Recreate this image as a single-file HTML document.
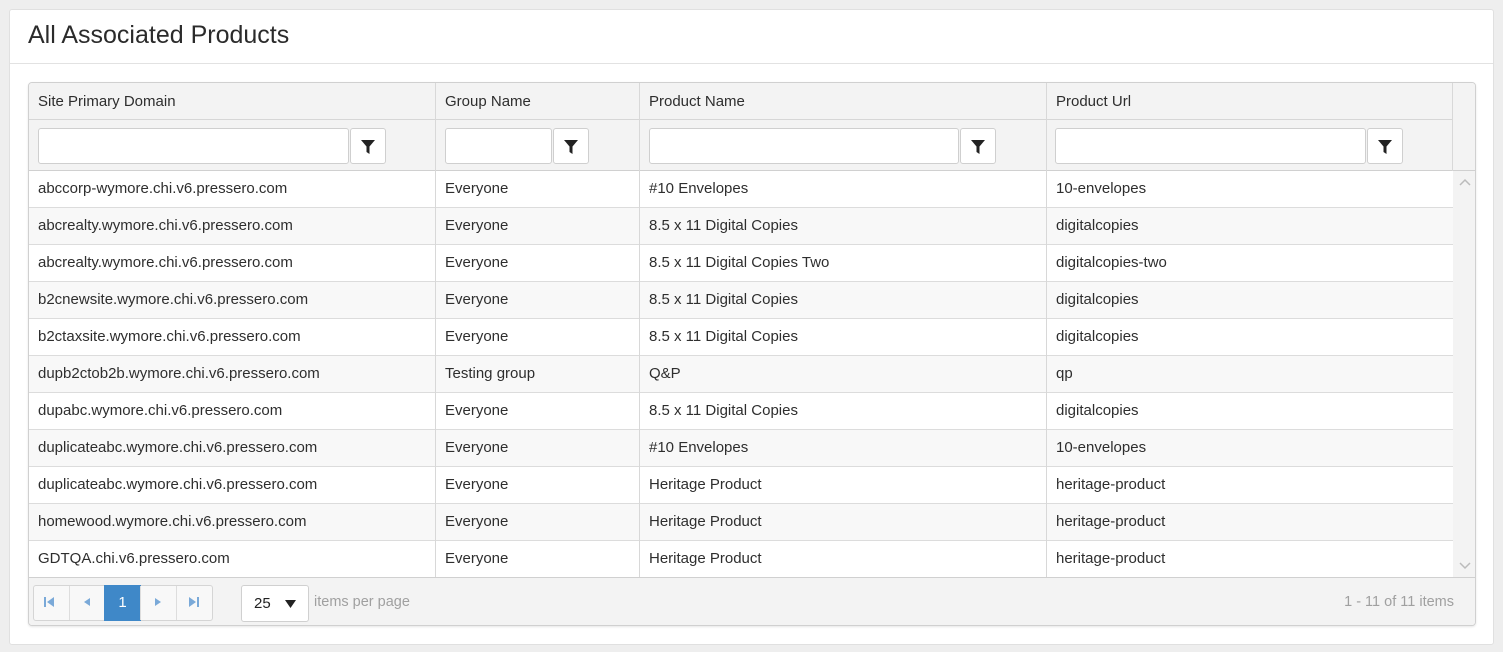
<!DOCTYPE html>
<html><head><style>
*{box-sizing:border-box;margin:0;padding:0}
body{width:1503px;height:652px;background:#eeeeee;font-family:"Liberation Sans",Arial,sans-serif;position:relative;overflow:hidden;color:#333}
.card{position:absolute;left:9px;top:9px;width:1485px;height:636px;background:#fff;border:1px solid #e0e0e0;border-radius:3px}
.title{position:absolute;left:18px;top:11px;font-size:25px;color:#2b2b2b}
.hr{position:absolute;left:0;right:0;top:53px;border-top:1px solid #e2e2e2}
.grid{position:absolute;left:28px;top:82px;width:1448px;height:544px;border:1px solid #d0d0d0;border-radius:4px;overflow:hidden;background:#fff;box-shadow:0 1px 2px rgba(0,0,0,.1)}
.a{position:absolute}
.hd{background:#f3f3f3}
.cell{position:absolute;font-size:15px;line-height:36px;padding-left:9px;white-space:nowrap;color:#2e2e2e}
.inp{position:absolute;height:36px;top:45px;background:#fff;border:1px solid #cfcfcf;border-radius:3px}
.btn{position:absolute;width:36px;height:36px;top:45px;background:#fff;border:1px solid #cfcfcf;border-radius:3px}
.btn svg{position:absolute;left:10px;top:11px}
.vl{position:absolute;width:1px;background:#d8d8d8}
.row{position:absolute;left:0;width:1424px;height:37px;border-bottom:1px solid #dcdcdc}
.pg{position:absolute;top:502px;height:36px;border:1px solid #d5d5d5;background:#f8f8f8}
</style></head><body>
<div class="card"><div class="title">All Associated Products</div><div class="hr"></div></div>
<div class="grid">
 <div class="a hd" style="left:0;top:0;width:1448px;height:88px;border-bottom:1px solid #d0d0d0"></div>
 <div class="a" style="left:0;top:36px;width:1424px;border-top:1px solid #d6d6d6"></div>
 <div class="vl" style="left:1423px;top:0;height:88px"></div>
 <div class="cell" style="left:0;top:1px">Site Primary Domain</div>
 <div class="cell" style="left:407px;top:1px">Group Name</div>
 <div class="cell" style="left:611px;top:1px">Product Name</div>
 <div class="cell" style="left:1018px;top:1px">Product Url</div>
 <div class="inp" style="left:9px;width:311px"></div><div class="btn" style="left:321px"><svg width="14" height="14" viewBox="0 0 14 14"><path d="M0 0H14L8.5 6.5V14L5.5 12V6.5Z" fill="#222"/></svg></div>
 <div class="inp" style="left:416px;width:107px"></div><div class="btn" style="left:524px"><svg width="14" height="14" viewBox="0 0 14 14"><path d="M0 0H14L8.5 6.5V14L5.5 12V6.5Z" fill="#222"/></svg></div>
 <div class="inp" style="left:620px;width:310px"></div><div class="btn" style="left:931px"><svg width="14" height="14" viewBox="0 0 14 14"><path d="M0 0H14L8.5 6.5V14L5.5 12V6.5Z" fill="#222"/></svg></div>
 <div class="inp" style="left:1026px;width:311px"></div><div class="btn" style="left:1338px"><svg width="14" height="14" viewBox="0 0 14 14"><path d="M0 0H14L8.5 6.5V14L5.5 12V6.5Z" fill="#222"/></svg></div>
 <div class="a" style="left:1424px;top:88px;width:24px;height:406px;background:#f3f3f3"></div>
 <svg class="a" style="left:1430px;top:95px" width="12" height="8"><path d="M1 7L6 2L11 7" stroke="#bbb" stroke-width="1.5" fill="none"/></svg>
 <svg class="a" style="left:1430px;top:479px" width="12" height="8"><path d="M1 1L6 6L11 1" stroke="#bbb" stroke-width="1.5" fill="none"/></svg>
 <div id="rows"></div>
 <div class="a" style="left:0;top:494px;width:1448px;height:50px;background:#f3f3f3;border-top:1px solid #d0d0d0"></div>
 <div class="pg" style="left:4px;width:180px;border-radius:3px;background:#f8f8f8"></div>
 <div class="a" style="left:75px;top:502px;width:37px;height:36px;background:#3f88c8;color:#fff;font-size:15px;line-height:36px;text-align:center">1</div>
 <div class="a" style="left:40px;top:503px;height:34px;border-left:1px solid #ddd"></div>
 <div class="a" style="left:111px;top:503px;height:34px;border-left:1px solid #ddd"></div>
 <div class="a" style="left:147px;top:503px;height:34px;border-left:1px solid #ddd"></div>
 <svg class="a" style="left:15px;top:514px" width="10" height="10"><rect x="0" y="0" width="2" height="10" fill="#7aa9d8"/><path d="M10 0V10L3 5Z" fill="#7aa9d8"/></svg>
 <svg class="a" style="left:53px;top:514px" width="10" height="10"><path d="M8 1V9L2 5Z" fill="#7aa9d8"/></svg>
 <svg class="a" style="left:124px;top:514px" width="10" height="10"><path d="M2 1V9L8 5Z" fill="#7aa9d8"/></svg>
 <svg class="a" style="left:160px;top:514px" width="10" height="10"><path d="M0 0V10L7 5Z" fill="#7aa9d8"/><rect x="8" y="0" width="2" height="10" fill="#7aa9d8"/></svg>
 <div class="a" style="left:212px;top:502px;width:68px;height:37px;background:#fff;border:1px solid #d0d0d0;border-radius:3px;font-size:15px;line-height:35px;padding-left:12px;color:#222">25<svg style="position:absolute;left:43px;top:14px" width="11" height="8"><path d="M0 0H11L5.5 8Z" fill="#222"/></svg></div>
 <div class="a" style="left:285px;top:511px;font-size:14.5px;color:#a0a0a0">items per page</div>
 <div class="a" style="right:21px;top:511px;font-size:14.5px;color:#a0a0a0">1 - 11 of 11 items</div>
</div>
<script>
var d=[["abccorp-wymore.chi.v6.pressero.com","Everyone","#10 Envelopes","10-envelopes"],
["abcrealty.wymore.chi.v6.pressero.com","Everyone","8.5 x 11 Digital Copies","digitalcopies"],
["abcrealty.wymore.chi.v6.pressero.com","Everyone","8.5 x 11 Digital Copies Two","digitalcopies-two"],
["b2cnewsite.wymore.chi.v6.pressero.com","Everyone","8.5 x 11 Digital Copies","digitalcopies"],
["b2ctaxsite.wymore.chi.v6.pressero.com","Everyone","8.5 x 11 Digital Copies","digitalcopies"],
["dupb2ctob2b.wymore.chi.v6.pressero.com","Testing group","Q&amp;P","qp"],
["dupabc.wymore.chi.v6.pressero.com","Everyone","8.5 x 11 Digital Copies","digitalcopies"],
["duplicateabc.wymore.chi.v6.pressero.com","Everyone","#10 Envelopes","10-envelopes"],
["duplicateabc.wymore.chi.v6.pressero.com","Everyone","Heritage Product","heritage-product"],
["homewood.wymore.chi.v6.pressero.com","Everyone","Heritage Product","heritage-product"],
["GDTQA.chi.v6.pressero.com","Everyone","Heritage Product","heritage-product"]];
var x=[0,407,611,1018],h="";
d.forEach(function(r,i){var t=88+i*37;h+='<div class="row" style="top:'+t+'px;background:'+(i%2?'#f8f8f8':'#fff')+(i==10?';border-bottom:none':'')+'"></div>';
r.forEach(function(c,j){h+='<div class="cell" style="left:'+x[j]+'px;top:'+t+'px">'+c+'</div>'})});
[406,610,1017].forEach(function(l){h+='<div class="vl" style="left:'+l+'px;top:0;height:494px"></div>'});
document.getElementById('rows').innerHTML=h;
</script>
</body></html>
